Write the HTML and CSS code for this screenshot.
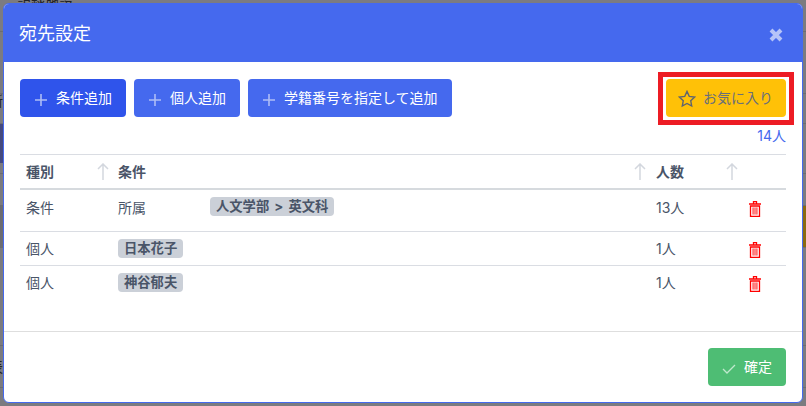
FILE: index.html
```html
<!DOCTYPE html>
<html lang="ja">
<head>
<meta charset="utf-8">
<title>宛先設定</title>
<link rel="stylesheet" href="styles.css">
</head>
<body>
<div class="page">
  <div class="pr pr-31"><span class="page-top">記録施設</span></div>
  <div class="pr pr-62"></div>
  <div class="pr pr-30"><span class="page-side">新</span></div>
  <div class="pr pr-39"><span class="sw sw-blue"></span></div>
  <div class="pr pr-11"></div>
  <div class="pr pr-33"></div>
  <div class="pr pr-41"><span class="sw sw-gray"></span><span class="sw sw-gold"></span></div>
  <div class="pr pr-39"></div>
  <div class="pr pr-59"></div>
  <div class="pr pr-42"><span class="page-side side-low">表</span></div>
</div>
<div class="modal">
  <header class="modal-head">
    <h1 class="modal-title">宛先設定</h1>
    <svg class="close" viewBox="0 0 14 14"><path d="M2 2l10 10M12 2L2 12"/></svg>
  </header>
  <section class="modal-body">
    <div class="toolbar">
      <button class="btn btn-blue btn-active"><svg class="ic" viewBox="0 0 14 14"><path d="M7 1v12M1 7h12"/></svg>条件追加</button>
      <button class="btn btn-blue"><svg class="ic" viewBox="0 0 14 14"><path d="M7 1v12M1 7h12"/></svg>個人追加</button>
      <button class="btn btn-blue"><svg class="ic" viewBox="0 0 14 14"><path d="M7 1v12M1 7h12"/></svg>学籍番号を指定して追加</button>
      <div class="fav-wrap">
        <button class="btn btn-fav"><svg class="star" viewBox="0 0 16 16"><path d="M8 1.2l2 4.4 4.8.6-3.5 3.3.9 4.8L8 12l-4.2 2.3.9-4.8L1.2 6.2 6 5.6z"/></svg>お気に入り</button>
      </div>
    </div>
    <div class="count">14人</div>
    <table class="grid">
      <colgroup><col class="c1"><col class="c2"><col class="c3"><col class="c4"></colgroup>
      <thead>
        <tr>
          <th><div class="th">種別<svg class="arrow" viewBox="0 0 12 18"><path d="M6 17V1M1 6l5-5 5 5"/></svg></div></th>
          <th class="th-mid"><div class="th">条件<svg class="arrow" viewBox="0 0 12 18"><path d="M6 17V1M1 6l5-5 5 5"/></svg></div></th>
          <th><div class="th">人数<svg class="arrow" viewBox="0 0 12 18"><path d="M6 17V1M1 6l5-5 5 5"/></svg></div></th>
          <th></th>
        </tr>
      </thead>
      <tbody>
        <tr class="row-tall">
          <td>条件</td>
          <td><div class="cond"><span class="cond-label">所属</span><span class="tag tag-wide">人文学部 &gt; 英文科</span></div></td>
          <td>13人</td>
          <td><svg class="trash" viewBox="0 0 12 16"><path class="tf" d="M3 6.5h6v7H3z"/><path class="tb" d="M4.2 6.5v7M6 6.5v7M7.8 6.5v7"/><path class="ts" d="M4.5 2.5V.6h3v1.9M0 3h12M1.5 5h9v10.4h-9z"/></svg></td>
        </tr>
        <tr>
          <td>個人</td>
          <td><span class="tag">日本花子</span></td>
          <td>1人</td>
          <td><svg class="trash" viewBox="0 0 12 16"><path class="tf" d="M3 6.5h6v7H3z"/><path class="tb" d="M4.2 6.5v7M6 6.5v7M7.8 6.5v7"/><path class="ts" d="M4.5 2.5V.6h3v1.9M0 3h12M1.5 5h9v10.4h-9z"/></svg></td>
        </tr>
        <tr>
          <td>個人</td>
          <td><span class="tag">神谷郁夫</span></td>
          <td>1人</td>
          <td><svg class="trash" viewBox="0 0 12 16"><path class="tf" d="M3 6.5h6v7H3z"/><path class="tb" d="M4.2 6.5v7M6 6.5v7M7.8 6.5v7"/><path class="ts" d="M4.5 2.5V.6h3v1.9M0 3h12M1.5 5h9v10.4h-9z"/></svg></td>
        </tr>
      </tbody>
    </table>
  </section>
  <footer class="modal-foot">
    <button class="btn btn-green"><svg class="check" viewBox="0 0 14 10"><path d="M1 5l4 4 8-8"/></svg>確定</button>
  </footer>
</div>
</body>
</html>
```
FILE: styles.css
```css
* { box-sizing: border-box; }
html, body { margin: 0; height: 100%; }
body {
  width: 806px;
  height: 406px;
  overflow: hidden;
  position: relative;
  background: #7b7b80;
  font-family: "Inter", "Noto Sans CJK JP", "Noto Sans", sans-serif;
  font-size: 14px;
  color: #4a5568;
}
.page { position: absolute; inset: 0; overflow: hidden; display: flex; flex-direction: column; }
.pr {
  flex: none;
  display: flex;
  justify-content: space-between;
  align-items: stretch;
  border-bottom: 1px solid #6c6c71;
  overflow: hidden;
}
.pr-11 { height: 11px; }
.pr-30 { height: 30px; }
.pr-31 { height: 32px; }
.pr-33 { height: 32px; }
.pr-39 { height: 39px; border-bottom: 0; }
.pr-41 { height: 42px; }
.pr-42 { height: 42px; }
.pr-59 { height: 59px; }
.pr-62 { height: 62px; }
.page-top { margin: -9px 0 0 17px; font-size: 14px; line-height: 20px; color: #222; white-space: nowrap; }
.page-side { margin: 0 0 0 -11px; font-size: 14px; line-height: 14px; color: #222; white-space: nowrap; }
.side-low { padding-top: 14px; }
.sw { display: block; width: 4px; }
.sw-blue { background: #44497f; }
.sw-gray { background: #6c6c72; }
.sw-gold { background: #8a6a10; margin-left: auto; width: 3px; }

.modal {
  position: absolute;
  left: 3px;
  top: 3px;
  width: 800px;
  height: 400px;
  background: #fff;
  border: 1px solid #4569ee;
  border-radius: 6px;
  overflow: hidden;
  display: flex;
  flex-direction: column;
}
.modal-head {
  flex: 0 0 58px;
  background: #4569ee;
  display: flex;
  align-items: center;
  justify-content: space-between;
  padding: 0 19px 0 15px;
}
.modal-title { margin: -2px 0 0; font-size: 18px; font-weight: 400; color: #fff; }
.close { width: 14px; height: 14px; margin-top: 4px; }
.close path { fill: none; stroke: #b6c4f8; stroke-width: 4; }

.modal-body { flex: 1; padding: 17px 16px 0; }
.toolbar { display: flex; gap: 8px; height: 38px; }
.btn {
  height: 38px;
  border: 0;
  border-radius: 4px;
  font-family: inherit;
  font-size: 14px;
  display: inline-flex;
  align-items: center;
  padding: 0 14px 3px;
  color: #fff;
}
.btn-blue { background: #4569ee; }
.btn-active { background: #2f54eb; }
.ic { width: 14px; height: 14px; margin-right: 8px; margin-top: 6px; }
.ic path { fill: none; stroke: #aebdf6; stroke-width: 1.6; }
.fav-wrap {
  margin-left: auto;
  position: relative;
}
.fav-wrap::before {
  content: "";
  position: absolute;
  left: -8px;
  right: -8px;
  top: -7px;
  bottom: -8px;
  border: 5px solid #ed1c24;
}
.btn-fav { position: relative; width: 120px; background: #ffc107; color: #6b6f7a; padding: 0 12px 3px; }
.star { width: 18px; height: 18px; margin-right: 7px; margin-top: 5px; }
.star path { fill: none; stroke: #5f6470; stroke-width: 1.2; }

.count { text-align: right; color: #4569ee; font-size: 14px; line-height: 18px; margin-top: 10px; margin-bottom: 9px; }

.grid { width: 766px; border-collapse: collapse; table-layout: fixed; }
.c1 { width: 92px; }
.c2 { width: 538px; }
.c3 { width: 91px; }
.c4 { width: 45px; }
.grid th {
  padding: 0 6px;
  height: 34px;
  border-top: 1px solid #dadde3;
  border-bottom: 2px solid #d6dade;
  text-align: left;
  font-weight: 700;
  color: #4a5568;
}
.th { display: flex; align-items: center; justify-content: space-between; }
.arrow { width: 12px; height: 18px; margin: 2px -3px 0 0; }
.th-mid .arrow { margin-right: -2px; }
.arrow path { fill: none; stroke: #d3d7de; stroke-width: 1.5; }
.grid td {
  padding: 0 6px 2px;
  height: 34px;
  border-bottom: 1px solid #dadde3;
  vertical-align: middle;
}
.grid tr:last-child td { border-bottom: 0; }
.grid .row-tall td { height: 43px; padding-bottom: 7px; }
.cond { display: flex; align-items: center; }
.cond-label { width: 92px; }
.tag {
  display: inline-block;
  background: #cbd0d8;
  color: #4a5568;
  font-weight: 700;
  font-size: 13.3px;
  border-radius: 4px;
  padding: 0 6px;
  line-height: 19px;
  height: 19px;
  vertical-align: -1px;
}
.tag-wide { word-spacing: 2px; }
.trash { width: 12px; height: 16px; display: block; margin: 5px 0 0 2px; }
.ts { fill: none; stroke: #ff0000; stroke-width: 1.3; }
.tf { fill: #ffb0b0; }
.tb { fill: none; stroke: #ff5a5a; stroke-width: 1; }

.modal-foot {
  flex: 0 0 71px;
  border-top: 1px solid #dedede;
  display: flex;
  justify-content: flex-end;
  align-items: flex-start;
  padding: 16px 16px 0;
}
.btn-green { background: #4ebd74; width: 78px; padding: 0 14px 3px; }
.check { width: 14px; height: 10px; margin-right: 8px; margin-top: 6px; }
.check path { fill: none; stroke: #bfe8cd; stroke-width: 1.3; }
```
